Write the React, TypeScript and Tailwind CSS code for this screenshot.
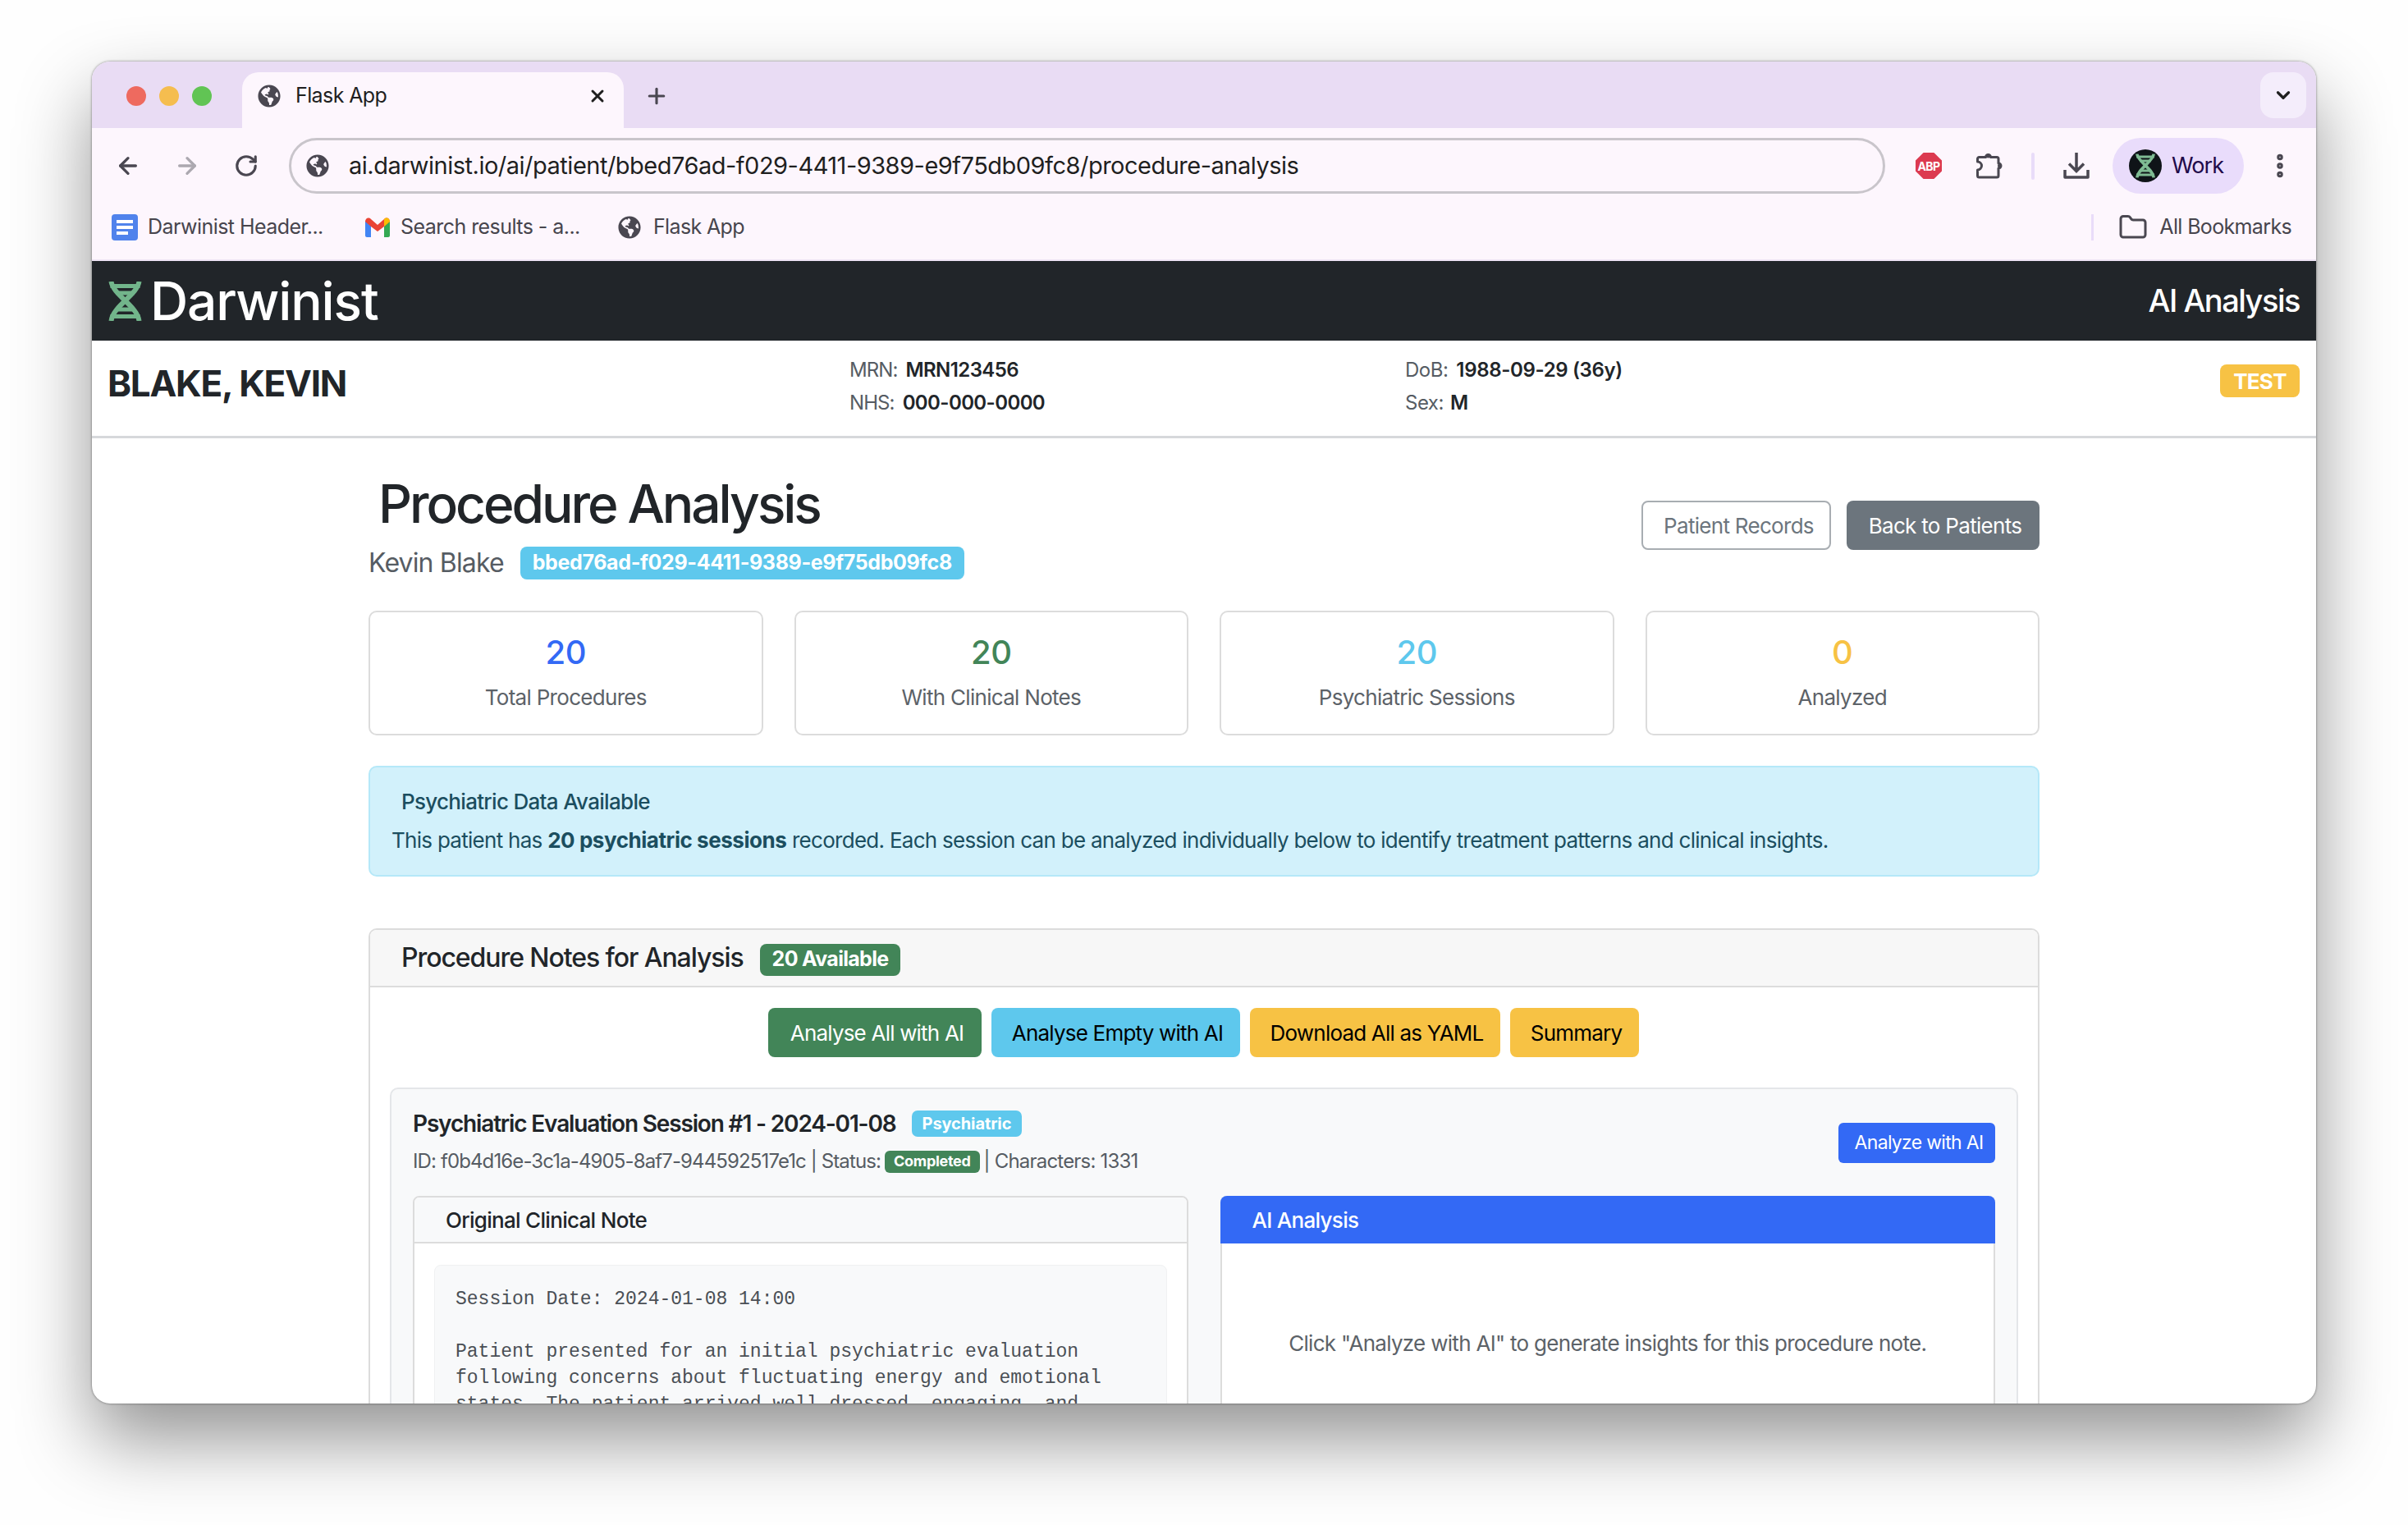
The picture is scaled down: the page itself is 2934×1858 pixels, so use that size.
import { ArrowLeft, ArrowRight, RotateCw, X, Plus, ChevronDown, EllipsisVertical, Folder } from 'lucide-react';
import { FaGlobeAmericas } from 'react-icons/fa';

function Dna({ className }: { className?: string }) {
  return (
    <svg viewBox="0 0 40 48" className={className} fill="none" stroke="currentColor">
      <path d="M3 0C5 16 35 30 37 48" strokeWidth="6" />
      <path d="M37 0C35 16 5 30 3 48" strokeWidth="6" />
      <path d="M2 5.5H38M9 14H31M9 34H31M2 42.5H38" strokeWidth="5" />
    </svg>
  );
}

function Stat({ value, label, color }: { value: string; label: string; color: string }) {
  return (
    <div className="flex-1 h-[152px] bg-white border-2 border-[#dcdcdc] rounded-[10px] flex flex-col items-center pt-[25px]">
      <div className={`text-[40px] leading-[48px] font-medium tracking-[-0.5px] ${color}`}>{value}</div>
      <div className="mt-[13px] text-[26px] leading-[36px] text-[#5c6268]">{label}</div>
    </div>
  );
}

export default function App() {
  return (
    <div className="w-[2934px] h-[1858px] overflow-hidden bg-[#fefefe] pt-[75px] pl-[112px] font-['Inter',sans-serif] text-[#212529] tracking-[-0.7px]">
      <div className="w-[2710px] h-[1635px] rounded-[22px] overflow-hidden bg-white flex flex-col shadow-[0_44px_90px_rgba(0,0,0,0.42),0_0_3px_rgba(0,0,0,0.5)]">
        {/* Tab strip */}
        <div className="h-[81px] bg-[#e9dcf4] flex items-end shrink-0">
          <div className="flex gap-[16px] ml-[42px] mb-[27px]">
            <span className="w-[24px] h-[24px] rounded-full bg-[#ee6a5f]" />
            <span className="w-[24px] h-[24px] rounded-full bg-[#f5bd4f]" />
            <span className="w-[24px] h-[24px] rounded-full bg-[#61c454]" />
          </div>
          <div className="ml-[37px] w-[465px] h-[68px] bg-[#fdf6fd] rounded-t-[20px] flex items-center pl-[19px] pr-[20px] pb-[10px]">
            <FaGlobeAmericas className="w-[28px] h-[28px] text-[#4a4751]" />
            <span className="ml-[18px] text-[25px] tracking-[-0.6px] text-[#1f1f1f]">Flask App</span>
            <X className="ml-auto w-[24px] h-[24px] text-[#1f1f1f]" strokeWidth={3} />
          </div>
          <Plus className="ml-[25px] mb-[24px] w-[30px] h-[30px] text-[#4a4751]" strokeWidth={2.5} />
          <div className="ml-auto mr-[12px] mb-[12px] w-[56px] h-[56px] rounded-[16px] bg-[#f4edfb] flex items-center justify-center">
            <ChevronDown className="w-[26px] h-[26px] text-[#1f1f1f]" strokeWidth={3} />
          </div>
        </div>

        {/* Toolbar */}
        <div className="h-[82px] bg-[#fdf6fd] flex items-center shrink-0 pl-[8px] pt-[10px]">
          <div className="w-[72px] flex justify-center"><ArrowLeft className="w-[32px] h-[32px] text-[#4a4751]" strokeWidth={2.5} /></div>
          <div className="w-[72px] flex justify-center"><ArrowRight className="w-[32px] h-[32px] text-[#aca8b0]" strokeWidth={2.5} /></div>
          <div className="w-[72px] flex justify-center"><RotateCw className="w-[30px] h-[30px] text-[#4a4751]" strokeWidth={2.5} /></div>
          <div className="ml-[16px] w-[1945px] h-[68px] rounded-full border-[3px] border-[#c9c5cb] flex items-center pl-[18px]">
            <FaGlobeAmericas className="w-[28px] h-[28px] text-[#4a4751]" />
            <span className="ml-[24px] text-[29px] tracking-[-0.5px] text-[#1f1f1f]">ai.darwinist.io/ai/patient/bbed76ad-f029-4411-9389-e9f75db09fc8/procedure-analysis</span>
          </div>
          <div className="ml-[37px] w-[32px] h-[32px] bg-[#dc3a50] [clip-path:polygon(30%_0,70%_0,100%_30%,100%_70%,70%_100%,30%_100%,0_70%,0_30%)] flex items-center justify-center text-white text-[14px] font-bold tracking-[-0.6px]">ABP</div>
          <svg viewBox="0 0 32 32" className="ml-[42px] w-[32px] h-[32px] text-[#4a4751]" fill="none" stroke="currentColor" strokeWidth="3">
            <path d="M3.5 5.5H11.5a3 3 0 0 1 6 0H25a2 2 0 0 1 2 2V13a3 3 0 0 1 0 6V28a2 2 0 0 1-2 2H3.5a2 2 0 0 1-2-2V21a5 5 0 0 0 0-10V7.5a2 2 0 0 1 2-2Z" strokeLinejoin="round" />
            <circle cx="14.5" cy="4" r="2.5" fill="currentColor" stroke="none" />
            <circle cx="28.5" cy="16" r="2.5" fill="currentColor" stroke="none" />
          </svg>
          <span className="ml-[35px] w-[4px] h-[33px] rounded-full bg-[#e9dcf9]" />
          <svg viewBox="0 0 32 32" className="ml-[35px] w-[32px] h-[32px] text-[#4a4751]" fill="none" stroke="currentColor" strokeWidth="3.5">
            <path d="M16 0V22M7 13.5L16 22.5L25 13.5" />
            <path d="M2 21V30H30V21" strokeLinejoin="round" />
          </svg>
          <div className="ml-[28px] w-[160px] h-[68px] rounded-full bg-[#e9dcfb] flex items-center pl-[20px]">
            <div className="w-[40px] h-[40px] rounded-full bg-[#0f1418] flex items-center justify-center">
              <Dna className="w-[24px] h-[30px] text-[#7fbb93]" />
            </div>
            <span className="ml-[12px] text-[27px] tracking-[-0.9px] text-[#1f0a4a]">Work</span>
          </div>
          <EllipsisVertical className="ml-[26px] w-[36px] h-[36px] text-[#4a4751]" strokeWidth={3} />
        </div>

        {/* Bookmarks */}
        <div className="h-[80px] bg-[#fdf6fd] border-b-[2px] border-[#efe4f5] flex items-center shrink-0 pl-[24px] pr-[30px] text-[25px] tracking-[-0.55px] text-[#47454d]">
          <div className="w-[32px] h-[32px] rounded-[4px] bg-[#5083ec] flex flex-col justify-center gap-[3px] px-[6px]">
            <span className="h-[4px] bg-white" />
            <span className="h-[4px] bg-white" />
            <span className="h-[4px] w-[14px] bg-white" />
          </div>
          <span className="ml-[12px] w-[215px] whitespace-nowrap">Darwinist Header...</span>
          <svg viewBox="0 0 30 24" className="ml-[50px] w-[30px] h-[24px]">
            <path d="M0 4V22C0 23 1 24 2 24H7V10Z" fill="#4285f4" />
            <path d="M30 4V22C30 23 29 24 28 24H23V10Z" fill="#34a853" />
            <path d="M0 5C0 1 4 -1 7 2L15 9L23 2C26 -1 30 1 30 5L23 11L15 17L7 11Z" fill="#ea4335" />
            <path d="M23 2C26 -1 30 1 30 5L23 11Z" fill="#fbbc04" />
          </svg>
          <span className="ml-[13px] w-[219px] whitespace-nowrap">Search results - a...</span>
          <FaGlobeAmericas className="ml-[46px] w-[28px] h-[28px] text-[#4a4751]" />
          <span className="ml-[15px] tracking-[-0.65px]">Flask App</span>
          <span className="ml-auto w-[3px] h-[32px] bg-[#e9dcf9]" />
          <Folder className="ml-[30px] w-[36px] h-[36px] text-[#4a4751]" strokeWidth={2} />
          <span className="ml-[14px] tracking-[-0.65px]">All Bookmarks</span>
        </div>

        {/* Site header */}
        <div className="h-[97px] bg-[#212529] flex items-center shrink-0 pl-[20px] pr-[20px]">
          <Dna className="w-[41px] h-[48px] text-[#72b58b]" />
          <span className="ml-[10px] text-[64px] leading-none font-[550] tracking-[-1.15px] text-white">Darwinist</span>
          <span className="ml-auto text-[38px] font-[550] tracking-[-1.5px] text-white">AI Analysis</span>
        </div>

        {/* Patient banner */}
        <div className="h-[119px] bg-white border-b-[3px] border-[#d6d8db] flex shrink-0 pl-[19px] pr-[20px] pt-[16px]">
          <div className="w-[904px] text-[44px] leading-[72px] font-bold tracking-[-1.25px]">BLAKE, KEVIN</div>
          <div className="w-[677px] text-[24px] leading-[40px] tracking-[-0.5px]">
            <div><span className="text-[#565c63] tracking-[-0.9px]">MRN:</span><span className="ml-[10px] font-semibold tracking-[-0.6px]">MRN123456</span></div>
            <div><span className="text-[#565c63] tracking-[-0.9px]">NHS:</span><span className="ml-[10px] font-semibold tracking-[-0.6px]">000-000-0000</span></div>
          </div>
          <div className="text-[24px] leading-[40px] tracking-[-0.5px]">
            <div><span className="text-[#565c63]">DoB:</span><span className="ml-[10px] font-semibold tracking-[-0.35px]">1988-09-29 (36y)</span></div>
            <div><span className="text-[#565c63]">Sex:</span><span className="ml-[8px] font-semibold">M</span></div>
          </div>
          <div className="ml-auto mt-[13px] h-[40px] w-[97px] rounded-[8px] bg-[#f7c244] text-white text-[26px] font-bold flex items-center justify-center">TEST</div>
        </div>

        {/* Main content */}
        <div className="w-[2036px] mx-auto flex-1 min-h-0">
          <div className="flex justify-between pt-[44px]">
            <div>
              <h1 className="ml-[12px] text-[64px] leading-[72px] font-[550] tracking-[-3.05px]">Procedure Analysis</h1>
              <div className="flex items-center mt-[16px]">
                <span className="text-[32px] leading-[40px] tracking-[-0.85px] text-[#565c63]">Kevin Blake</span>
                <span className="ml-[20px] h-[40px] px-[15px] rounded-[8px] bg-[#5ec8ed] text-white text-[25px] font-bold tracking-[-0.36px] flex items-center">bbed76ad-f029-4411-9389-e9f75db09fc8</span>
              </div>
            </div>
            <div className="flex gap-[19px] mt-[32px]">
              <div className="w-[231px] h-[60px] rounded-[8px] border-2 border-[#a8adb2] text-[#6c757d] text-[26px] pl-[6px] flex items-center justify-center">Patient Records</div>
              <div className="w-[235px] h-[60px] rounded-[8px] bg-[#6c757d] text-white text-[26px] pl-[5px] flex items-center justify-center">Back to Patients</div>
            </div>
          </div>

          <div className="flex gap-[38px] mt-[38px]">
            <Stat value="20" label="Total Procedures" color="text-[#3369f5]" />
            <Stat value="20" label="With Clinical Notes" color="text-[#428558]" />
            <Stat value="20" label="Psychiatric Sessions" color="text-[#5ec8ed]" />
            <Stat value="0" label="Analyzed" color="text-[#f7c244]" />
          </div>

          <div className="mt-[37px] h-[135px] rounded-[10px] border-2 border-[#b5e8f8] bg-[#d2f1fb] text-[#1b4e5f] text-[26px] pt-[22px] pl-[26px]">
            <div className="ml-[12px] leading-[40px] font-medium">Psychiatric Data Available</div>
            <div className="leading-[40px] mt-[7px] tracking-[-0.72px]">This patient has <b className="font-bold tracking-[-0.45px]">20 psychiatric sessions</b> recorded. Each session can be analyzed individually below to identify treatment patterns and clinical insights.</div>
          </div>

          {/* Procedure notes card */}
          <div className="mt-[63px] rounded-t-[10px] border-2 border-[#dcdcdc] border-b-0 h-[600px]">
            <div className="h-[70px] bg-[#f7f7f7] border-b-2 border-[#dcdcdc] rounded-t-[8px] flex items-center pl-[38px]">
              <span className="text-[32px] font-medium tracking-[-1.07px]">Procedure Notes for Analysis</span>
              <span className="ml-[20px] mt-[4px] h-[39px] px-[15px] rounded-[8px] bg-[#428558] text-white text-[25px] font-bold tracking-[-0.7px] flex items-center">20 Available</span>
            </div>
            <div className="flex justify-center gap-[12px] mt-[25px] mr-[1px] text-[26px] tracking-[-0.8px]">
              <div className="w-[260px] h-[60px] rounded-[8px] bg-[#428558] text-white pl-[5px] flex items-center justify-center">Analyse All with AI</div>
              <div className="w-[303px] h-[60px] rounded-[8px] bg-[#5ec8ed] text-black pl-[4px] flex items-center justify-center">Analyse Empty with AI</div>
              <div className="w-[305px] h-[60px] rounded-[8px] bg-[#f7c244] text-black pl-[4px] flex items-center justify-center">Download All as YAML</div>
              <div className="w-[157px] h-[60px] rounded-[8px] bg-[#f7c244] text-black pl-[4px] flex items-center justify-center">Summary</div>
            </div>

            <div className="mx-[24px] mt-[37px] h-[500px] rounded-[10px] border-2 border-[#e4e6e9] bg-[#f8f9fa] px-[26px] pt-[24px]">
              <div className="flex items-start justify-between">
                <div>
                  <div className="flex items-center">
                    <span className="text-[28px] leading-[36px] font-semibold tracking-[-1.16px]">Psychiatric Evaluation Session #1 - 2024-01-08</span>
                    <span className="ml-[19px] h-[32px] px-[13px] rounded-[7px] bg-[#5ec8ed] text-white text-[20px] font-bold tracking-[-0.1px] flex items-center">Psychiatric</span>
                  </div>
                  <div className="flex items-center mt-[10px] text-[24px] text-[#565c63] leading-[36px] tracking-[-0.88px]">
                    <span>ID: f0b4d16e-3c1a-4905-8af7-944592517e1c | Status:</span>
                    <span className="mx-[5px] h-[27px] px-[11px] rounded-[6px] bg-[#428558] text-white text-[18px] font-bold tracking-[-0.3px] flex items-center">Completed</span>
                    <span className="tracking-[-0.8px]">| Characters: 1331</span>
                  </div>
                </div>
                <div className="mt-[17px] w-[191px] h-[49px] rounded-[6px] bg-[#3369f5] text-white text-[23px] pl-[5px] flex items-center justify-center">Analyze with AI</div>
              </div>

              <div className="flex gap-[39px] mt-[24px]">
                <div className="flex-1 h-[400px] rounded-t-[8px] border-2 border-[#dcdcdc] bg-white">
                  <div className="h-[56px] bg-[#f8f9fa] border-b-2 border-[#dcdcdc] rounded-t-[6px] flex items-center pl-[38px] text-[26px] font-medium">Original Clinical Note</div>
                  <div className="mx-[24px] mt-[26px] h-[300px] rounded-[8px] bg-[#f8f9fa] border border-[#f0f1f2] pl-[25px] pt-[25px] font-['Liberation_Mono',monospace] text-[23px] leading-[32px] tracking-normal text-[#4a4f55] whitespace-pre">
                    <div>Session Date: 2024-01-08 14:00</div>
                    <div className="mt-[32px]">Patient presented for an initial psychiatric evaluation</div>
                    <div>following concerns about fluctuating energy and emotional</div>
                    <div>states. The patient arrived well-dressed, engaging, and</div>
                  </div>
                </div>
                <div className="flex-1 h-[400px] rounded-t-[8px] border-2 border-[#dcdcdc] border-t-0 bg-white">
                  <div className="h-[58px] -mx-[2px] bg-[#3369f5] rounded-t-[8px] flex items-center pl-[39px] text-[26px] font-medium text-white">AI Analysis</div>
                  <div className="pt-[104px] text-center text-[26px] leading-[36px] text-[#5c6268]">Click "Analyze with AI" to generate insights for this procedure note.</div>
                </div>
              </div>
            </div>
          </div>
        </div>
      </div>
    </div>
  );
}
